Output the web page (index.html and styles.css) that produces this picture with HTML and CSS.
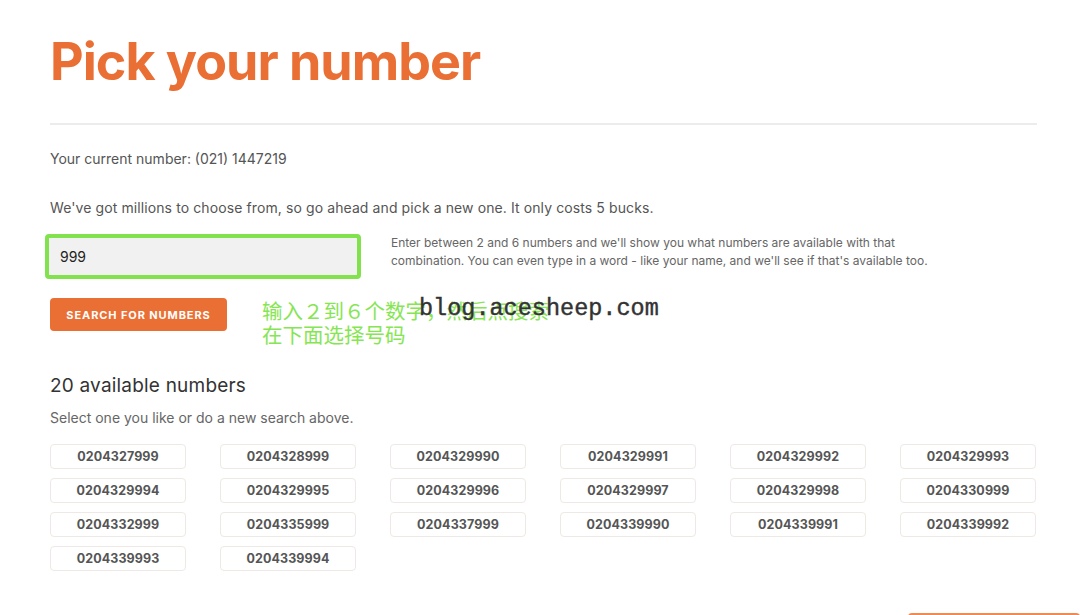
FILE: index.html
```html
<!DOCTYPE html>
<html lang="en">
<head>
  <meta charset="UTF-8">
  <title>Pick your number</title>
  <meta name="viewport" content="width=device-width, initial-scale=1">
  <link rel="stylesheet" href="styles.css">
</head>
<body>
  <div class="page">
    <h1 class="title">Pick your number</h1>
    <hr class="rule">
    <p class="current">Your current number: (021) 1447219</p>
    <p class="intro">We've got millions to choose from, so go ahead and pick a new one. It only costs 5 bucks.</p>

    <form class="search">
      <input type="text" class="search-input" value="999">
      <p class="hint">Enter between 2 and 6 numbers and we'll show you what numbers are available with that combination. You can even type in a word - like your name, and we'll see if that's available too.</p>
    </form>

    <div class="actions">
      <button type="button" class="btn">SEARCH FOR NUMBERS</button>
      <div class="note">
        <span>输入２到６个数字，然后点搜索</span>
        <span>在下面选择号码</span>
        <span class="mark">blog.acesheep.com</span>
      </div>
    </div>

    <h2 class="count">20 available numbers</h2>
    <p class="sub">Select one you like or do a new search above.</p>

    <div class="numbers">
      <button class="num">0204327999</button>
      <button class="num">0204328999</button>
      <button class="num">0204329990</button>
      <button class="num">0204329991</button>
      <button class="num">0204329992</button>
      <button class="num">0204329993</button>
      <button class="num">0204329994</button>
      <button class="num">0204329995</button>
      <button class="num">0204329996</button>
      <button class="num">0204329997</button>
      <button class="num">0204329998</button>
      <button class="num">0204330999</button>
      <button class="num">0204332999</button>
      <button class="num">0204335999</button>
      <button class="num">0204337999</button>
      <button class="num">0204339990</button>
      <button class="num">0204339991</button>
      <button class="num">0204339992</button>
      <button class="num">0204339993</button>
      <button class="num">0204339994</button>
    </div>

    <div class="footer">
      <div class="next"></div>
    </div>
  </div>
</body>
</html>
```

FILE: styles.css
```css
body { margin: 0; background: #fff; font-family: "Inter", "Noto Sans", sans-serif; color: #555; overflow: hidden; }
.page { width: 987px; margin: 0 0 0 50px; padding-top: 30px; }
.title { margin: 0; font-size: 52px; font-weight: 700; color: #ea6f35; letter-spacing: -1px; line-height: 64px; }
.rule { border: none; border-top: 2px solid #ececec; margin: 29px 0 0; }
.current { margin: 26px 0 0; font-size: 14px; line-height: 16px; }
.intro { margin: 33px 0 0; font-size: 14px; line-height: 16px; letter-spacing: 0.1px; }
.search { display: flex; gap: 30px; margin-top: 18px; margin-left: -5px; }
.search-input { box-sizing: border-box; width: 316px; height: 45px; border: 4px solid #82e24e; border-radius: 4px; background: #f1f1f1; padding: 0 11px; font: 14px "Inter", sans-serif; color: #222; }
.hint { margin: 0; width: 545px; font-size: 12px; line-height: 18px; color: #666; }
.actions { display: flex; margin-top: 19px; gap: 35px; }
.btn { width: 177px; height: 33px; border: none; border-radius: 4px; background: #ea6f35; color: #fff; font: 700 11px "Inter", sans-serif; letter-spacing: 0.9px; }
.note { position: relative; display: flex; flex-direction: column; font-family: "Noto Sans CJK SC", sans-serif; font-size: 20.5px; line-height: 24px; color: #86e553; }
.mark { position: absolute; left: 157px; top: -1px; font-family: "Liberation Mono", monospace; font-size: 23.5px; color: #333; white-space: nowrap; -webkit-text-stroke: 0.4px #333; }
.count { margin: 28px 0 0; font-size: 19px; font-weight: 400; color: #333; line-height: 24px; letter-spacing: 0.2px; }
.sub { margin: 11px 0 0; font-size: 14px; line-height: 18px; color: #666; }
.numbers { display: grid; grid-template-columns: repeat(6, 136px); column-gap: 34px; row-gap: 9px; margin-top: 17px; }
.num { height: 25px; border: 1px solid #eee9e4; border-radius: 4px; background: #fff; font: 700 12.5px "Inter", sans-serif; color: #555; letter-spacing: 0.1px; }
.footer { display: flex; justify-content: flex-end; margin-right: -43px; margin-top: 42px; }
.next { width: 172px; height: 30px; background: #f08a55; border-radius: 4px 4px 0 0; }
```
